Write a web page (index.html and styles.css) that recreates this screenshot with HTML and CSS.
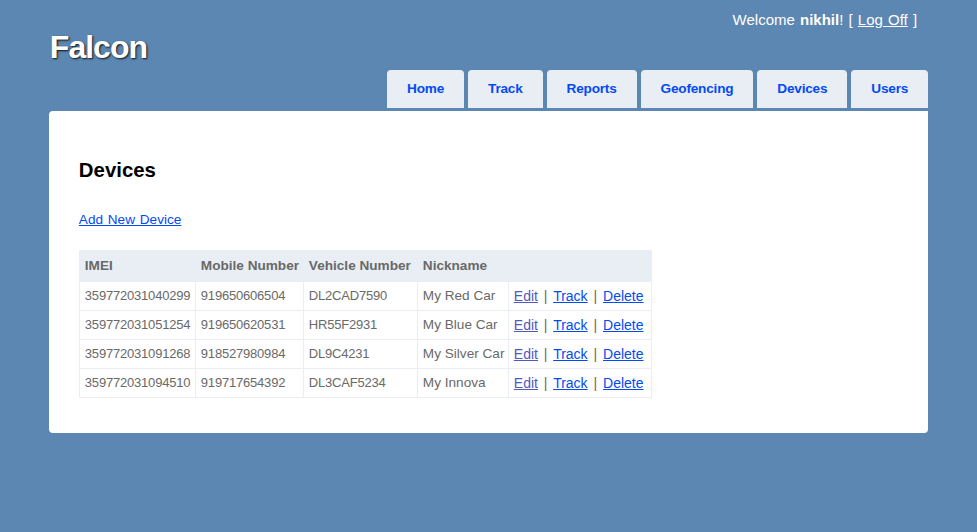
FILE: index.html
```html
<!DOCTYPE html>
<html>
<head>
<meta charset="utf-8">
<title>Devices</title>
<link rel="stylesheet" href="styles.css">
</head>
<body>
<div class="page">
  <div class="header">
    <div class="login">Welcome <b>nikhil</b>! [ <a href="#">Log Off</a> ]</div>
    <div class="titlebar">
      <h1 class="brand">Falcon</h1>
      <ul class="menu">
        <li><a href="#">Home</a></li>
        <li><a href="#">Track</a></li>
        <li><a href="#">Reports</a></li>
        <li><a href="#">Geofencing</a></li>
        <li><a href="#">Devices</a></li>
        <li><a href="#">Users</a></li>
      </ul>
    </div>
  </div>
  <div class="main">
    <h2 class="heading">Devices</h2>
    <p class="actions"><a href="#">Add New Device</a></p>
    <table class="grid">
      <colgroup>
        <col class="c1"><col class="c2"><col class="c3"><col class="c4"><col class="c5">
      </colgroup>
      <thead>
        <tr><th>IMEI</th><th>Mobile Number</th><th>Vehicle Number</th><th>Nickname</th><th></th></tr>
      </thead>
      <tbody>
        <tr><td class="num">359772031040299</td><td class="num">919650606504</td><td class="num">DL2CAD7590</td><td>My Red Car</td><td class="links"><a class="visited" href="#">Edit</a> | <a href="#">Track</a> | <a href="#">Delete</a></td></tr>
        <tr><td class="num">359772031051254</td><td class="num">919650620531</td><td class="num">HR55F2931</td><td>My Blue Car</td><td class="links"><a class="visited" href="#">Edit</a> | <a href="#">Track</a> | <a href="#">Delete</a></td></tr>
        <tr><td class="num">359772031091268</td><td class="num">918527980984</td><td class="num">DL9C4231</td><td>My Silver Car</td><td class="links"><a class="visited" href="#">Edit</a> | <a href="#">Track</a> | <a href="#">Delete</a></td></tr>
        <tr><td class="num">359772031094510</td><td class="num">919717654392</td><td class="num">DL3CAF5234</td><td>My Innova</td><td class="links"><a class="visited" href="#">Edit</a> | <a href="#">Track</a> | <a href="#">Delete</a></td></tr>
      </tbody>
    </table>
  </div>
</div>
</body>
</html>
```
FILE: styles.css
```css
html, body {
  margin: 0;
  padding: 0;
}
body {
  background-color: #5c87b2;
  font-family: "Liberation Sans", Arial, sans-serif;
  font-size: 13.6px;
  color: #696969;
}
a {
  color: #034af3;
  text-decoration: underline;
}
a.visited {
  color: #505abc;
}
.page {
  width: 90%;
  margin: 0 auto;
}
.header {
  display: flex;
  flex-direction: column;
}
.login {
  margin: 10px 11px 0 10px;
  height: 20px;
  line-height: 20px;
  text-align: right;
  font-size: 15px;
  word-spacing: 1px;
  color: #fff;
}
.login a {
  color: #fff;
}
.titlebar {
  display: flex;
  justify-content: space-between;
  align-items: flex-start;
  height: 81px;
}
.brand {
  margin: 1px 0 0 1px;
  font-size: 32px;
  line-height: 32px;
  font-weight: bold;
  letter-spacing: -1px;
  color: #fff;
  text-shadow: 1px 1px 2px #111;
}
.menu {
  align-self: flex-end;
  display: flex;
  gap: 4px;
  list-style: none;
  margin: 0;
  padding: 0 0 3px;
}
.menu li a {
  display: block;
  height: 38px;
  line-height: 38px;
  padding: 0 20px;
  background-color: #e8eef4;
  color: #034af3;
  font-weight: bold;
  letter-spacing: -0.2px;
  text-decoration: none;
  border-radius: 4px 4px 0 0;
}
.main {
  background-color: #fff;
  padding: 30px 30px 35px;
  border-radius: 4px 0 4px 4px;
}
.heading {
  margin: 17px 0;
  padding: 0 0 10px;
  font-size: 20.4px;
  line-height: 24px;
  color: #000;
  font-weight: bold;
}
.actions {
  margin: 0 0 20px;
  line-height: 21px;
  word-spacing: 1px;
}
.grid {
  border-collapse: collapse;
  border: 1px solid #e8eef4;
  table-layout: fixed;
  width: 572px;
}
.grid col.c1 { width: 116px; }
.grid col.c2 { width: 108px; }
.grid col.c3 { width: 114px; }
.grid col.c4 { width: 91px; }
.grid col.c5 { width: 143px; }
.grid th, .grid td {
  border: 1px solid #e8eef4;
  line-height: 18px;
  text-align: left;
  white-space: nowrap;
  overflow: visible;
}
.grid th {
  padding: 6px 5px;
  background-color: #e8eef4;
  font-weight: bold;
  font-size: 13.6px;
}
.grid td {
  padding: 5px;
  font-size: 13.6px;
}
.grid td.num {
  font-size: 13px;
  letter-spacing: -0.2px;
}
.grid td.links {
  font-size: 14px;
  word-spacing: 2px;
}
```
